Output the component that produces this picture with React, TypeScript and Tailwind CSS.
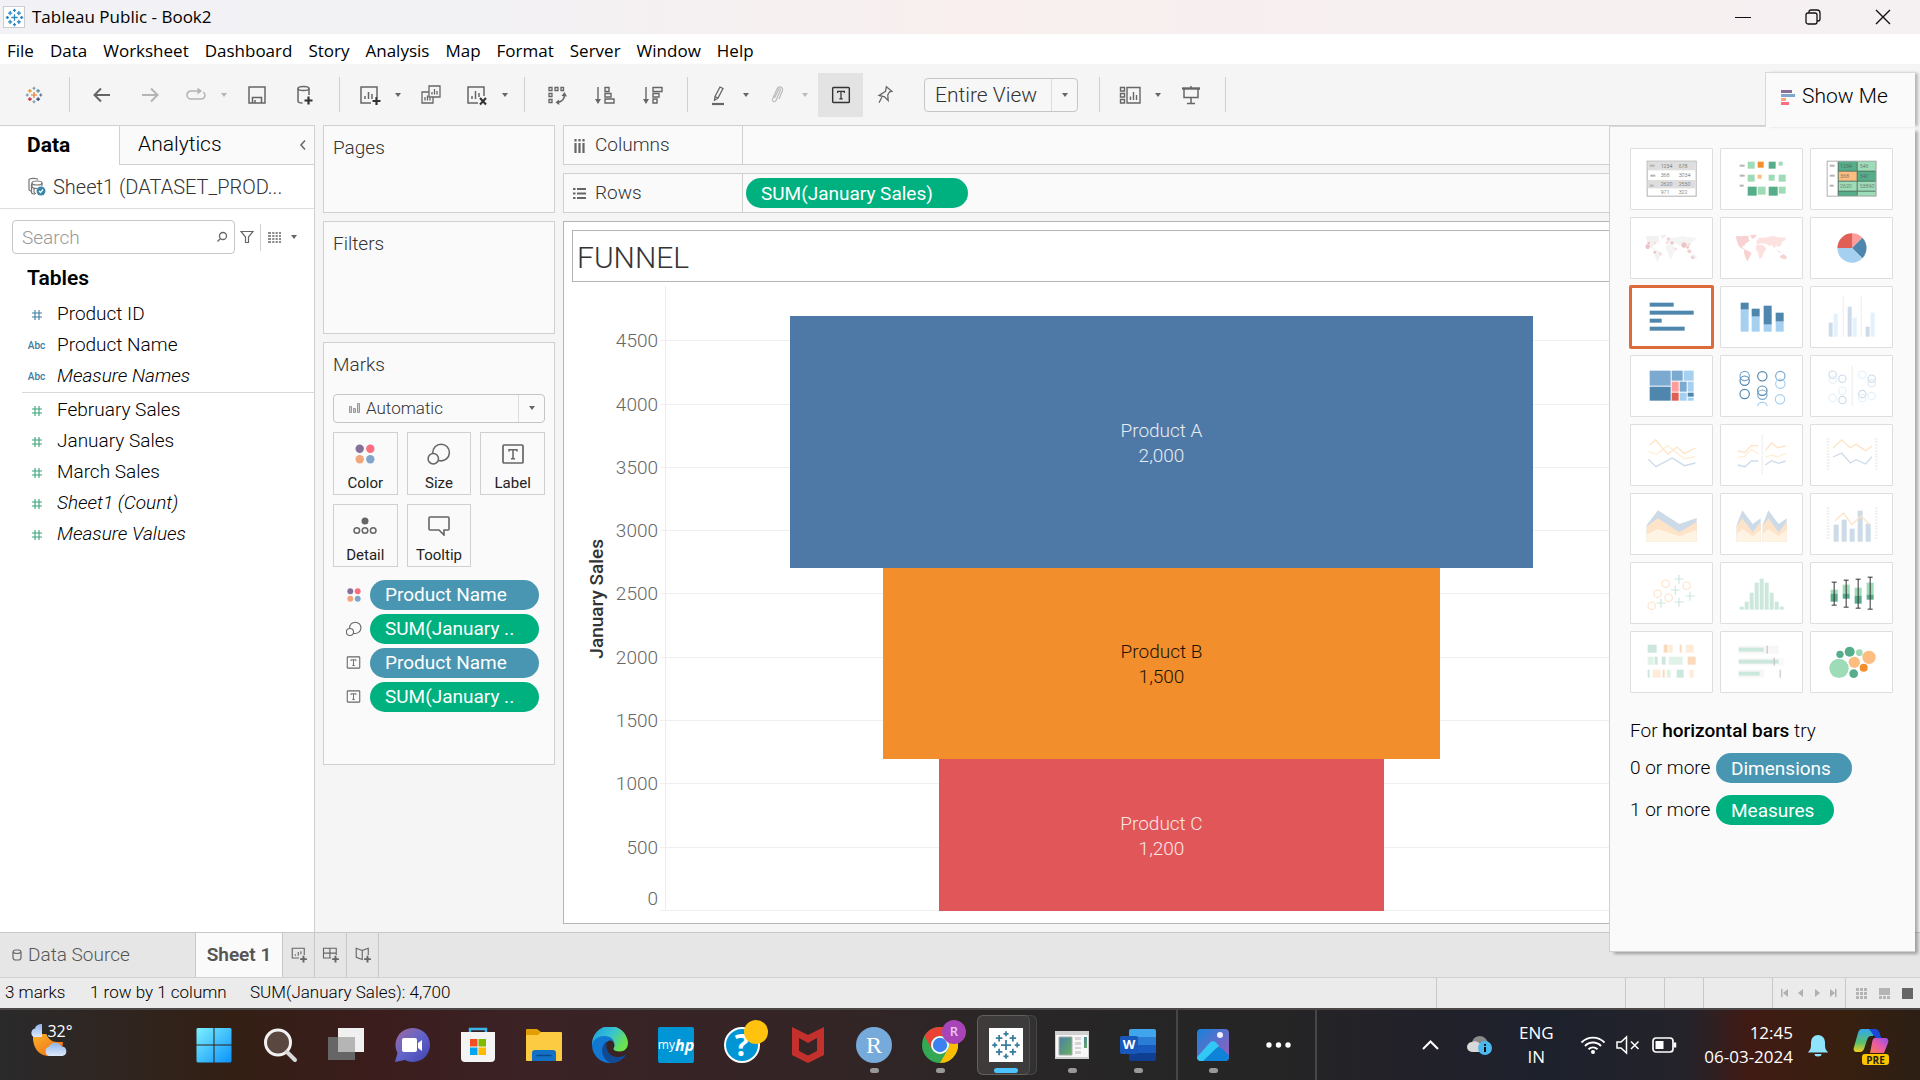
import React, { type ReactNode } from "react";

const menus = ["File", "Data", "Worksheet", "Dashboard", "Story", "Analysis", "Map", "Format", "Server", "Window", "Help"];

/* ---------- shared small pieces ---------- */

function Icon({ children, size = 24, color = "#666" }: { children: ReactNode; size?: number; color?: string }) {
  return (
    <svg width={size} height={size} viewBox="0 0 24 24" fill="none" stroke={color} strokeWidth="1.5" className="shrink-0" aria-hidden="true">
      {children}
    </svg>
  );
}

function Caret({ color = "#666" }: { color?: string }) {
  return (
    <svg width="8" height="8" viewBox="0 0 8 8" className="shrink-0" aria-hidden="true">
      <path d="M1 2h6L4 6z" fill={color} />
    </svg>
  );
}

const crosses: [number, number, number, string][] = [
  [12, 12, 4, "#e8762d"],
  [6.5, 6.5, 2.6, "#e8912d"],
  [17.5, 6.5, 2.6, "#5b879b"],
  [6.5, 17.5, 2.6, "#c72035"],
  [17.5, 17.5, 2.6, "#1f447e"],
  [12, 3, 2, "#7199a6"],
  [12, 21, 2, "#7199a6"],
  [3, 12, 2, "#7199a6"],
  [21, 12, 2, "#5c6692"],
];

function TableauMark({ size, color, weight = 1.6 }: { size: number; color?: string; weight?: number }) {
  return (
    <svg width={size} height={size} viewBox="0 0 24 24" fill="none" strokeWidth={weight} className="shrink-0" aria-hidden="true">
      {crosses.map(([x, y, r, c]) => (
        <path key={`${x}-${y}`} d={`M${x - r} ${y}h${r * 2}M${x} ${y - r}v${r * 2}`} stroke={color ?? c} />
      ))}
    </svg>
  );
}

function FourDots({ size }: { size: number }) {
  return (
    <svg width={size} height={size} viewBox="0 0 20 20" aria-hidden="true">
      <circle cx="4.7" cy="4.7" r="4.2" fill="#86709a" />
      <circle cx="15.3" cy="4.7" r="4.2" fill="#fa6e80" />
      <circle cx="4.7" cy="15.3" r="4.2" fill="#f3a57b" />
      <circle cx="15.3" cy="15.3" r="4.2" fill="#82a5cc" />
    </svg>
  );
}

function SizeIcon({ size }: { size: number }) {
  return (
    <Icon size={size}>
      <path d="M6.5 11.500a8 8 0 1 1 7 7.500c-.7 0-1.200-.1-1.800-.3" />
      <circle cx="7" cy="17" r="5" />
    </Icon>
  );
}

function TextIcon({ size, color = "#666" }: { size: number; color?: string }) {
  return (
    <Icon size={size} color={color}>
      <rect x="2" y="3" width="20" height="18" rx="1" strokeWidth="1.7" />
      <path d="M8 9.500V7.700h8v1.800M12 7.700v9M10 16.700h4" />
    </Icon>
  );
}

function Pill({ children, tone, className = "" }: { children: ReactNode; tone: "blue" | "green"; className?: string }) {
  return (
    <span
      className={`flex h-[30px] items-center rounded-full pt-px pl-[15px] text-[19px] leading-6 font-normal whitespace-nowrap text-white ${tone === "blue" ? "bg-[#4996b2]" : "bg-[#00b180]"} ${className}`}
    >
      {children}
    </span>
  );
}

/* ---------- toolbar ---------- */

function Tool({ label, children, narrow }: { label: string; children: ReactNode; narrow?: boolean }) {
  return (
    <button type="button" aria-label={label} className={`flex h-11 shrink-0 items-center justify-center ${narrow ? "w-11" : "w-12"}`}>
      {children}
    </button>
  );
}

function ToolCaret({ label, color }: { label: string; color?: string }) {
  return (
    <button type="button" aria-label={label} className="flex h-11 w-[15px] shrink-0 items-center pl-[2px]">
      <Caret color={color} />
    </button>
  );
}

function Sep() {
  return <span className="mr-[8px] ml-[10px] h-[35px] w-px shrink-0 bg-[#d0d0d0]" />;
}

function Toolbar() {
  return (
    <div className="flex h-[61px] items-center bg-[#f5f5f5]" role="toolbar">
      <button type="button" aria-label="Start page" className="flex h-11 w-[59px] items-center justify-end pr-4">
        <TableauMark size={18} />
      </button>
      <Sep />
      <Tool label="Undo"><Icon><path d="M20 12H5M11 5.500L4.500 12l6.500 6.500" strokeWidth="2" /></Icon></Tool>
      <Tool label="Redo"><Icon color="#b4b4b4"><path d="M4 12h15M13 5.500l6.500 6.500-6.500 6.500" strokeWidth="2" /></Icon></Tool>
      <Tool label="Replay" narrow>
        <Icon color="#b4b4b4">
          <path d="M10 16H6.500a4 4 0 0 1-3.500-4.300A4 4 0 0 1 6.500 8H17M10 16h7.500A4 4 0 0 0 21 12.500c0-1.500-.7-2.700-1.700-3.500" />
          <path d="M13.500 4.500L18 8l-4.500 3.500z" fill="#b4b4b4" stroke="none" />
        </Icon>
      </Tool>
      <ToolCaret label="Replay options" color="#b4b4b4" />
      <Tool label="Save"><Icon><path d="M4 4h16v16H4zM7.500 20v-5.500h9V20M10 20v-3" /></Icon></Tool>
      <Tool label="New data source">
        <Icon>
          <ellipse cx="10.500" cy="5.500" rx="5.500" ry="2" />
          <path d="M5 5.500V18c0 1.300 2 2 4.500 2M16 5.500V12" />
          <path d="M15.500 13.500v8M11.500 17.500h8" stroke="#333" strokeWidth="2.200" />
        </Icon>
      </Tool>
      <Sep />
      <Tool label="New worksheet" narrow>
        <Icon>
          <path d="M13 20H3V4h16v10M7 16v-3M10.500 16V9M14 16v-5" />
          <path d="M18.500 14v8M14.500 18h8" stroke="#333" strokeWidth="2.200" />
        </Icon>
      </Tool>
      <ToolCaret label="Worksheet options" />
      <Tool label="Duplicate">
        <Icon><path d="M10 3h11v11H10zM13 11.500V9M15.500 11.500V6M18 11.500V8M10 9H3v11h11v-6M6 17.500V14M8.500 17.500v-5M11 17.500V15" strokeWidth="1.300" /></Icon>
      </Tool>
      <Tool label="Clear sheet" narrow>
        <Icon>
          <path d="M13 20H3V4h16v9M7 16v-3M10.500 16V8M14 14v-4" />
          <path d="M15 15l6 6.500M21 15l-6 6.500" stroke="#333" strokeWidth="2.100" />
        </Icon>
      </Tool>
      <ToolCaret label="Clear options" />
      <Sep />
      <Tool label="Swap rows and columns">
        <Icon>
          <path d="M4 4.500h3v3H4zM10 4.500h3v3h-3zM16 4.500h2.500v3H16zM4 10.500h3v3H4zM4 16.500h3v3H4z" strokeWidth="1.300" />
          <path d="M19.500 12c0 4-2 6.500-7 7.500" />
          <path d="M16.500 13l3-4 2.500 4.500zM14 16.500l-3.500 3 3.800 2.500z" fill="#666" stroke="none" />
        </Icon>
      </Tool>
      <Tool label="Sort ascending">
        <Icon><path d="M5 4v15M12 4.500h4v4h-4zM12 10.500h6v3.500h-6zM12 16h9v4h-9z" strokeWidth="1.400" /><path d="M2 16h6l-3 5z" fill="#666" stroke="none" /></Icon>
      </Tool>
      <Tool label="Sort descending">
        <Icon><path d="M5 4v15M12 4.500h9v4h-9zM12 10.500h6v3.500h-6zM12 16h4v4h-4z" strokeWidth="1.400" /><path d="M2 16h6l-3 5z" fill="#666" stroke="none" /></Icon>
      </Tool>
      <Sep />
      <Tool label="Highlight" narrow>
        <Icon><path d="M9 13.500L14 4l3 1.500L12 15l-3.500 2.200zM9 13.500l3 1.500" strokeWidth="1.300" /><path d="M6 21h12" strokeWidth="2.200" /></Icon>
      </Tool>
      <ToolCaret label="Highlight options" />
      <Tool label="Group members" narrow>
        <Icon color="#bbb"><path d="M9.500 15l4-8.500c.6-1.200 2.200-.6 1.800.7L11 17.500c-1 2.300-4.200 1-3.500-1.200L12 6c1.500-3.500 6.500-2 5.500 1.500L14 16" strokeWidth="1.200" /></Icon>
      </Tool>
      <ToolCaret label="Group options" color="#bbb" />
      <button type="button" aria-label="Show mark labels" aria-pressed="true" className="ml-1 flex h-11 w-[45px] shrink-0 items-center justify-center bg-[#e3e3e3]">
        <TextIcon size={20} color="#333" />
      </button>
      <Tool label="Fix axes" narrow>
        <Icon size={22}><path d="M13.500 3l6 5-2.500.5-2 3.500.5 6-4-4-6-1.500 4-2.500 3-2zM8.500 14.500l-3 6" strokeWidth="1.400" /></Icon>
      </Tool>
      <label className="relative ml-[17px] flex h-[34px] w-[154px] shrink-0 items-center rounded-sm border border-[#c6c6c6] bg-[#f7f7f7]">
        <span className="sr-only">Fit</span>
        <select className="h-full w-full appearance-none bg-transparent pl-[10px] text-[21px] leading-7 font-light text-[#333]" defaultValue="Entire View">
          <option>Entire View</option>
        </select>
        <span className="pointer-events-none absolute inset-y-0 right-0 flex w-[26px] items-center justify-center border-l border-[#dcdcdc]">
          <Caret />
        </span>
      </label>
      <span className="w-[11px]" />
      <Sep />
      <Tool label="Show/hide cards" narrow>
        <Icon><path d="M2.500 4.500h4v3.500h-4zM2.500 10.500h4v3.500h-4zM2.500 16.500h4v3.500h-4zM9 4.500h13V20H9zM12.500 17v-3.500M15.500 17V9M18.500 17v-5" strokeWidth="1.400" /></Icon>
      </Tool>
      <ToolCaret label="Card options" />
      <Tool label="Presentation mode">
        <Icon><path d="M5 6v8.500h14V6M12 3v2M12 14.500V20M8 20.500h8" /><path d="M3 5.500h18" strokeWidth="2.400" /></Icon>
      </Tool>
      <Sep />
    </div>
  );
}

/* ---------- data pane ---------- */

type Field = { name: string; kind: "number" | "text"; italic?: boolean };
const dimensions: Field[] = [
  { name: "Product ID", kind: "number" },
  { name: "Product Name", kind: "text" },
  { name: "Measure Names", kind: "text", italic: true },
];
const measures: Field[] = [
  { name: "February Sales", kind: "number" },
  { name: "January Sales", kind: "number" },
  { name: "March Sales", kind: "number" },
  { name: "Sheet1 (Count)", kind: "number", italic: true },
  { name: "Measure Values", kind: "number", italic: true },
];

function FieldRow({ field, color }: { field: Field; color: string }) {
  return (
    <li className="flex h-[31px] items-center">
      <span className="flex w-[29px] items-center justify-center">
        {field.kind === "number" ? (
          <svg width="12" height="12" viewBox="0 0 12 12" stroke={color} strokeWidth="1.100" aria-hidden="true">
            <path d="M4 1v10M8 1v10M1 4h10M1 8h10" />
          </svg>
        ) : (
          <span className="text-[10px] font-medium text-[#3a7ca0]">Abc</span>
        )}
      </span>
      <span className={`ml-[6px] text-[19px] font-light text-black ${field.italic ? "italic" : ""}`}>{field.name}</span>
    </li>
  );
}

function DataPane() {
  return (
    <aside className="flex w-[315px] shrink-0 flex-col border-t border-r border-[#d0d0d0] bg-white">
      <div className="flex h-[39px]">
        <button type="button" className="w-[119px] pl-[27px] text-left text-[21px] font-bold text-black">Data</button>
        <div className="flex flex-1 items-center justify-between border-b border-l border-[#d0d0d0] bg-[#fafafa] pr-[7px] pl-[18px]">
          <button type="button" className="text-[21px] font-light text-black">Analytics</button>
          <button type="button" aria-label="Collapse pane" className="flex">
            <svg width="8" height="12" viewBox="0 0 8 12" fill="none" stroke="#666" strokeWidth="1.500"><path d="M6 1.500L2 6l4 4.500" /></svg>
          </button>
        </div>
      </div>
      <button type="button" className="flex h-11 items-center border-b border-[#dedede] pl-[27px]">
        <svg width="19" height="19" viewBox="0 0 19 19" fill="none" stroke="#777" strokeWidth="1.200" aria-hidden="true">
          <path d="M11 2.500C10 .8 2 .8 2 3v9.500c0 .8 1 1.400 2 1.700M4.500 7v8.500c0 1 1.500 1.500 3.500 1.500" />
          <ellipse cx="10" cy="6" rx="5" ry="2" />
          <path d="M5 6v3.500c0 1 2 2 5 2M15 6v3M7 11v4c0 1 1 1.500 2 1.700" />
          <circle cx="14" cy="14" r="4.500" fill="#3a87a8" stroke="none" />
          <path d="M12 14l1.500 1.500 2.500-3" stroke="#fff" />
        </svg>
        <span className="ml-[7px] text-[20px] font-light text-[#333]">Sheet1 (DATASET_PROD...</span>
      </button>
      <div className="flex items-center pt-[11px] pl-3">
        <label className="flex h-[34px] w-[223px] items-center rounded-sm border border-[#c6c6c6] pr-[6px]">
          <span className="sr-only">Search fields</span>
          <input type="text" placeholder="Search" className="h-full w-full min-w-0 bg-transparent pl-[9px] text-[19px] leading-6 font-light placeholder:text-[#999]" />
          <svg width="12" height="12" viewBox="0 0 12 12" fill="none" stroke="#666" strokeWidth="1.300" className="shrink-0"><circle cx="7" cy="5" r="3.500" /><path d="M4.500 7.500L1.500 10.500" /></svg>
        </label>
        <button type="button" aria-label="Filter fields" className="flex w-[25px] justify-center pr-px">
          <svg width="14" height="14" viewBox="0 0 14 14" fill="none" stroke="#666" strokeWidth="1.200"><path d="M1 1.500h12L8.500 7v5.500h-3V7z" /></svg>
        </button>
        <span className="h-[27px] w-px bg-[#d0d0d0]" />
        <button type="button" aria-label="View fields" className="flex w-[37px] items-center justify-between pl-[7px]">
          <svg width="13" height="11" viewBox="0 0 13 11" stroke="#666" strokeWidth="1.300" strokeDasharray="3 1.200 2.200 1.200 2.200 1.200"><path d="M0 1h13M0 4h13M0 7h13M0 10h13" /></svg>
          <Caret />
        </button>
      </div>
      <h2 className="mt-[9px] flex h-[31px] items-center pl-[27px] text-[21px] font-semibold text-black">Tables</h2>
      <ul className="mt-[5px] ml-[22px] border-b border-[#d9d9d9]">
        {dimensions.map((f) => <FieldRow key={f.name} field={f} color="#3a7ca0" />)}
      </ul>
      <ul className="mt-[2px] ml-[22px]">
        {measures.map((f) => <FieldRow key={f.name} field={f} color="#3aa37a" />)}
      </ul>
    </aside>
  );
}

/* ---------- cards ---------- */

function MarkButton({ label, children }: { label: string; children: ReactNode }) {
  return (
    <button type="button" className="flex h-[63px] flex-col items-center justify-between border border-[#d0d0d0] bg-[#fafafa] pt-[10px] pb-[1px]">
      <span className="flex h-[22px] items-center">{children}</span>
      <span className="text-[15px] leading-5 font-normal text-[#222]">{label}</span>
    </button>
  );
}

function Shelves() {
  const pills: [ReactNode, string, "blue" | "green"][] = [
    [<FourDots size={14} />, "Product Name", "blue"],
    [<SizeIcon size={17} />, "SUM(January ..", "green"],
    [<TextIcon size={15} />, "Product Name", "blue"],
    [<TextIcon size={15} />, "SUM(January ..", "green"],
  ];
  return (
    <div className="ml-2 flex w-[232px] shrink-0 flex-col gap-2 text-[19px] font-light text-[#333]">
      <section className="h-[88px] border border-[#d0d0d0] bg-[#fafafa] px-[9px] pt-2"><h3>Pages</h3></section>
      <section className="h-[113px] border border-[#d0d0d0] bg-[#fafafa] px-[9px] pt-2"><h3>Filters</h3></section>
      <section className="h-[423px] border border-[#d0d0d0] bg-[#fafafa] px-[9px] pt-2">
        <h3>Marks</h3>
        <label className="relative mt-[14px] flex h-[29px] items-center rounded-sm border border-[#c6c6c6]">
          <span className="sr-only">Mark type</span>
          <svg width="11" height="10" viewBox="0 0 11 10" className="absolute left-[15px]" fill="#ccc" stroke="#999"><path d="M.5 3.500h2v6h-2zM4.500 5.500h2v4h-2zM8.500 .5h2v9h-2z" /></svg>
          <select className="h-full w-full appearance-none bg-transparent pl-8 text-[17px] leading-6 font-light text-[#333]" defaultValue="Automatic">
            <option>Automatic</option>
          </select>
          <span className="pointer-events-none absolute inset-y-0 right-0 flex w-[26px] items-center justify-center border-l border-[#dcdcdc]"><Caret /></span>
        </label>
        <div className="mt-[9px] grid grid-cols-3 gap-[9px]">
          <MarkButton label="Color"><FourDots size={20} /></MarkButton>
          <MarkButton label="Size"><SizeIcon size={25} /></MarkButton>
          <MarkButton label="Label"><TextIcon size={24} /></MarkButton>
          <MarkButton label="Detail">
            <svg width="24" height="18" viewBox="0 0 24 18" fill="none" stroke="#666" strokeWidth="1.500"><circle cx="12" cy="4" r="3.500" fill="#666" stroke="none" /><circle cx="3.800" cy="13.500" r="2.800" /><circle cx="12" cy="13.500" r="2.800" /><circle cx="20.200" cy="13.500" r="2.800" /></svg>
          </MarkButton>
          <MarkButton label="Tooltip">
            <svg width="22" height="20" viewBox="0 0 22 20" fill="none" stroke="#666" strokeWidth="1.600"><path d="M2 1h18a1 1 0 0 1 1 1v11a1 1 0 0 1-1 1h-4v5l-5-5H2a1 1 0 0 1-1-1V2a1 1 0 0 1 1-1z" /></svg>
          </MarkButton>
        </div>
        <ul className="mt-[13px] flex flex-col gap-1">
          {pills.map(([icon, text, tone], i) => (
            <li key={i} className="flex items-center">
              <span className="flex w-[37px] items-center justify-center pl-1">{icon}</span>
              <Pill tone={tone} className="w-[169px]">{text}</Pill>
            </li>
          ))}
        </ul>
      </section>
    </div>
  );
}

/* ---------- worksheet ---------- */

const DOMAIN = 4936;
const ticks = [4500, 4000, 3500, 3000, 2500, 2000, 1500, 1000, 500, 0];
const bars = [
  { name: "Product A", value: 2000, box: "w-[75%] bg-[#4e79a7] text-[#e6ecf2]" },
  { name: "Product B", value: 1500, box: "w-[56.25%] bg-[#f28e2b] text-[#1c1208]" },
  { name: "Product C", value: 1200, box: "w-[45%] bg-[#e15759] text-[#fbe6e6]" },
];

function Chart() {
  return (
    <div className="mt-1 flex min-h-0 flex-1 pr-[252px]">
      <div className="flex w-[50px] items-center justify-center">
        <span className="rotate-180 text-[19px] font-medium whitespace-nowrap text-[#333] [writing-mode:vertical-rl]">January Sales</span>
      </div>
      <div className="relative w-[43px] text-[19px] font-light text-[#666]">
        {ticks.map((t) => (
          <span key={t} className={`absolute right-[7px] ${t === 0 ? "-translate-y-1 leading-4" : "translate-y-1/2 leading-6"}`} style={{ bottom: `${(t / DOMAIN) * 100}%` }}>{t}</span>
        ))}
      </div>
      <div className="relative flex flex-1 flex-col items-center border-l border-[#ececec]">
        {ticks.map((t) => (
          <span key={t} className="absolute right-0 -left-[6px] h-px bg-[#efefef]" style={{ bottom: `${(t / DOMAIN) * 100}%` }} />
        ))}
        <div style={{ flexGrow: DOMAIN - 4700 }} />
        {bars.map((b) => (
          <div key={b.name} className={`relative flex basis-0 flex-col items-center justify-center pt-[2px] text-[19px] leading-[25px] font-light ${b.box}`} style={{ flexGrow: b.value }}>
            <span>{b.name}</span>
            <span>{b.value.toLocaleString("en-US")}</span>
          </div>
        ))}
      </div>
    </div>
  );
}

function Worksheet() {
  return (
    <main className="mr-[10px] ml-2 flex min-w-0 flex-1 flex-col gap-2 text-[19px] font-light text-[#333]">
      <div className="flex h-10 border border-[#d0d0d0] bg-[#fafafa]">
        <div className="flex w-[179px] items-center gap-[10px] border-r border-[#d0d0d0] pt-px pl-[10px]">
          <svg width="11" height="14" viewBox="0 0 11 14" stroke="#666" strokeWidth="2.200"><path d="M1.500 4v10M5.500 4v10M9.500 4v10M1.500 0v2.500M5.500 0v2.500M9.500 0v2.500" /></svg>
          Columns
        </div>
      </div>
      <div className="flex h-10 border border-[#d0d0d0] bg-[#fafafa]">
        <div className="flex w-[179px] items-center gap-[9px] border-r border-[#d0d0d0] pt-px pl-[9px]">
          <svg width="13" height="11" viewBox="0 0 13 11" stroke="#666" strokeWidth="2"><path d="M4 1h9M4 5.500h9M4 10h9M0 1h2.500M0 5.500h2.500M0 10h2.500" /></svg>
          Rows
        </div>
        <div className="flex items-center pl-[3px]"><Pill tone="green" className="w-[222px]">SUM(January Sales)</Pill></div>
      </div>
      <section className="mb-2 flex min-h-0 flex-1 flex-col border border-[#b4b4b4] bg-white py-2 pb-3 pl-2">
        <h1 className="mr-2 flex h-[52px] items-center border border-[#b4b4b4] pt-[2px] pl-1 text-[30px] font-light text-[#333]">FUNNEL</h1>
        <Chart />
      </section>
    </main>
  );
}

/* ---------- Show Me panel ---------- */

type R = [number, number, number, number, string];
const Rects = ({ d }: { d: R[] }) => <>{d.map(([x, y, w, h, c], i) => <rect key={i} x={x} y={y} width={w} height={h} fill={c} />)}</>;
type C = [number, number, number, string];
const Rings = ({ d }: { d: C[] }) => <>{d.map(([x, y, r, c], i) => <circle key={i} cx={x} cy={y} r={r} stroke={c} strokeWidth="3.500" fill="none" />)}</>;
const Discs = ({ d }: { d: C[] }) => <>{d.map(([x, y, r, c], i) => <circle key={i} cx={x} cy={y} r={r} fill={c} />)}</>;
const Line = ({ d, c }: { d: string; c: string }) => <polyline points={d} fill="none" stroke={c} strokeWidth="4" />;

const L = "#a5d0f0", B = "#4f86ae", M = "#7ba9d0", G = "#56ad8a", g = "#9edcb7", O = "#f28e2b", o = "#fdbc80";
const pb = "#cddbe9", po = "#fde4c8", py = "#fef0d6", pg = "#cce7dc";

function Land({ a, b }: { a: string; b: string }) {
  return (
    <>
      <g fill={a}>
        <path d="M138 529l14 1 14-2 12 2-2 9 5 3-9 7-6 4-2 6-4-1-3 4 8 7-6-1-12-9-5-14zM180 527l22-2-7 9-8 4-3-7zM163 569l12 4 11 7-6 12-7 14-5-11-5-15z" />
        <path d="M270 590l12-7 10 9-4 7-14-3z" />
      </g>
      <g fill={b}>
        <path d="M200 545l8-11 17 0 25-5 14 4 25 1-4 9-7 2-5 13-8 4-6-5-5 10-6-10-10 1-8-6-14-1-15 3zM200 556l18-1 8 7 5 5-9 12-6 17h-7l-4-18-7-10zM262 570l12 8 4 4-13-5z" />
      </g>
    </>
  );
}

function Numbers({ rows, x1, x2 }: { rows: [number, string, string][]; x1: number; x2: number }) {
  return (
    <g fontSize="16" fill="#555" fontFamily="Roboto">
      {rows.map(([y, p, q]) => (
        <React.Fragment key={y}><text x={x1} y={y}>{p}</text><text x={x2} y={y}>{q}</text></React.Fragment>
      ))}
    </g>
  );
}

function Ladder() {
  return (
    <g stroke="#e6e6e6" strokeWidth="3">
      {[88, 97, 106, 115, 124, 133, 142, 151, 160, 169, 178].map((y) => <path key={y} d={`M681 ${y}h9M826 ${y}h8`} />)}
    </g>
  );
}

const dash = (x: number, ys: number[]): R[] => ys.map((y) => [x, y, 15, 6, "#b4b4b4"]);

/* Each drawing carries the origin of its own coordinate space. */
const charts: { name: string; x: number; y: number; on?: boolean; art: ReactNode }[] = [
  { name: "Text table", x: 91, y: 265, art: <><rect x="142.500" y="304.500" width="147" height="105" fill="#fff" stroke="#b0b0b0" strokeWidth="3" /><Rects d={[[144, 306, 144, 26, "#dedede"], [144, 361, 144, 25, "#dedede"], ...dash(150, [315]), ...dash(152, [345]), [150, 375, 12, 6, "#b4b4b4"]]} /><Numbers x1={183} x2={237} rows={[[325, "1234", "678"], [353, "368", "3034"], [379, "2620", "2550"], [403, "971", "322"]]} /></> },
  { name: "Heat map", x: 361, y: 265, art: <Rects d={[...dash(420, [315, 345]), [420, 375, 12, 6, "#b4b4b4"], [444, 306, 21, 21, g], [474, 306, 18, 18, O], [507, 306, 21, 21, G], [537, 306, 12, 12, g], [444, 345, 21, 21, g], [474, 345, 12, 12, o], [507, 345, 18, 18, g], [537, 345, 21, 21, g], [444, 381, 27, 27, G], [474, 381, 24, 24, g], [507, 381, 27, 27, G], [537, 381, 21, 21, g]]} /> },
  { name: "Highlight table", x: 631, y: 265, art: <><rect x="682.500" y="304.500" width="147" height="105" fill="#fff" stroke="#b0b0b0" strokeWidth="3" /><Rects d={[[714, 306, 114, 102, "#557466"], [717, 306, 54, 27, G], [774, 306, 54, 27, g], [717, 336, 54, 27, o], [774, 336, 54, 27, G], [717, 366, 54, 27, g], [774, 366, 54, 27, g], [717, 396, 54, 12, G], [774, 396, 54, 12, g], ...dash(690, [315, 345]), [690, 375, 12, 6, "#b4b4b4"]]} /><Numbers x1={721} x2={780} rows={[[324, "1234", "546"], [355, "368", "340"], [385, "2620", "53890"]]} /></> },
  { name: "Symbol map", x: 91, y: 472, art: <><Land a="#f1f1f1" b="#f4f4f4" /><Discs d={[[144, 561, 7, "#efc3c6"], [147, 550, 4, "#efc3c6"], [166, 550, 4, "#fbdcdc"], [206, 538, 5, "#f6cfcf"], [202, 549, 4, "#fbdcdc"], [217, 550, 5, "#efc3c6"], [253, 556, 8, "#efc3c6"], [267, 554, 4, "#fbdcdc"], [264, 563, 4, "#efc3c6"], [269, 575, 6, "#f6cfcf"], [228, 568, 4, "#fbdcdc"], [165, 578, 4, "#efc3c6"], [182, 583, 5, "#fbdcdc"], [279, 594, 4, "#efc3c6"]]} /></> },
  { name: "Map", x: 361, y: 472, art: <g transform="translate(270 0)"><Land a="#f8d2d2" b="#fde0e0" /></g> },
  { name: "Pie chart", x: 631, y: 472, art: <><path d="M757 565V521a44 44 0 0 0-44 44z" fill="#e06056" /><path d="M757 565V521a44 44 0 0 1 31 13z" fill="#ff9d9a" /><path d="M757 565l31-31a44 44 0 0 1 0 62z" fill={B} /><path d="M757 565l31 31a44 44 0 0 1-75-31z" fill={L} /></> },
  { name: "Horizontal bars", x: 91, y: 679, on: true, art: <Rects d={[[150, 729, 72, 12, B], [150, 753, 132, 12, B], [150, 777, 36, 12, B], [150, 801, 105, 12, B]]} /> },
  { name: "Stacked bars", x: 361, y: 679, art: <Rects d={[[423, 729, 24, 21, B], [423, 750, 24, 66, L], [456, 747, 24, 24, B], [456, 771, 24, 45, L], [492, 738, 24, 57, B], [492, 795, 24, 21, L], [528, 759, 24, 27, B], [528, 786, 24, 30, L]]} /> },
  { name: "Side-by-side bars", x: 631, y: 679, art: <Rects d={[[687, 789, 12, 42, pb], [702, 762, 12, 69, "#e2f1fc"], [729, 711, 3, 120, "#ececec"], [744, 741, 12, 90, pb], [759, 774, 12, 57, "#e2f1fc"], [783, 711, 3, 120, "#ececec"], [798, 801, 12, 30, pb], [813, 759, 12, 72, "#e2f1fc"]]} /> },
  { name: "Treemap", x: 91, y: 886, art: <Rects d={[[150, 933, 63, 45, M], [150, 981, 63, 42, B], [216, 933, 33, 30, M], [252, 933, 30, 30, L], [216, 966, 21, 30, "#ff9d9a"], [240, 966, 21, 30, M], [264, 966, 18, 30, L], [216, 999, 21, 24, "#e06056"], [240, 999, 21, 24, L], [264, 999, 18, 12, B], [264, 1014, 18, 9, L]]} /> },
  { name: "Circle views", x: 361, y: 886, art: <><Rings d={[[435, 949, 14, M], [435, 963, 14, B], [435, 1003, 14, B], [488, 950, 14, B], [488, 993, 14, B], [488, 1005, 14, M], [542, 949, 14, M], [542, 972, 14, L], [541, 1019, 14, L]]} /><path d="M474 1040a14 12 0 0 1 28 0" fill="none" stroke={L} strokeWidth="3.500" /></> },
  { name: "Side-by-side circles", x: 631, y: 886, art: <><Rects d={[[756, 918, 3, 120, "#ececec"]]} /><Rings d={[[699, 945, 11, pb], [699, 960, 11, "#e2f1fc"], [728, 957, 11, pb], [728, 993, 11, "#e2f1fc"], [699, 1015, 11, "#e2f1fc"], [728, 1021, 11, pb], [788, 945, 11, "#e2f1fc"], [816, 957, 11, pb], [816, 971, 11, "#dbe9f4"], [788, 1003, 11, pb], [788, 1015, 11, "#e2f1fc"], [816, 1009, 11, "#e2f1fc"]]} /></> },
  { name: "Continuous lines", x: 91, y: 43, art: <><Line c={py} d="146,126 170,134 204,108 254,147 287,141" /><Line c={po} d="149,107 168,91 204,134 232,112 254,132 287,115" /><Line c={pb} d="146,149 169,171 218,145 254,168 287,160" /></> },
  { name: "Discrete lines", x: 361, y: 43, art: <><Rects d={[[486, 75, 3, 120, "#ececec"]]} /><Line c={py} d="414,144 434,140 456,119 476,133" /><Line c={po} d="414,124 436,128 456,107 476,109" /><Line c={pb} d="414,166 436,171 455,154 476,154" /><Line c={py} d="497,142 516,136 534,142 558,131" /><Line c={po} d="497,123 516,100 534,114 558,109" /><Line c={pb} d="497,166 516,153 536,161 558,154" /></> },
  { name: "Dual lines", x: 631, y: 43, art: <><Ladder /><Line c={po} d="700,115 726,91 752,114 769,104 798,123 817,109" /><Line c={pb} d="700,142 726,130 752,160 769,150 798,163 817,141" /></> },
  { name: "Area charts (continuous)", x: 91, y: 250, art: <><path d="M141 346l34-44 64 41 52-18v71H141z" fill={pb} /><path d="M141 350l34-24 64 42 52-32v60H141z" fill={po} /><path d="M141 374l34-16 64 22 52-19v35H141z" fill="#fff3e4" /></> },
  { name: "Area charts (discrete)", x: 361, y: 250, art: <>{[0, 78].map((dx) => <g key={dx} transform={`translate(${dx} 0)`}><path d="M411 346l17-44 31 41 24-17v70h-72z" fill={pb} /><path d="M411 350l17-24 31 42 24-32v60h-72z" fill={po} /><path d="M411 374l17-16 31 22 24-19v35h-72z" fill="#fff3e4" /></g>)}</> },
  { name: "Dual combination", x: 631, y: 250, art: <><g transform="translate(0 207)"><Ladder /></g><Rects d={[[702, 345, 15, 51, pb], [726, 330, 15, 66, pb], [750, 357, 15, 39, pb], [774, 303, 15, 93, pb], [798, 342, 15, 54, pb]]} /><Line c={po} d="706,333 732,310 757,345 784,319 811,345" /></> },
  { name: "Scatter plot", x: 91, y: 457, art: <><Rings d={[[198, 522, 11, po], [261, 528, 11, po], [174, 552, 11, po], [207, 564, 11, po], [156, 588, 11, po]]} /><path d="M238 495v27M225 508h27M227 528v27M213 541h27M271 546v27M258 559h27M238 564v27M225 577h27M184 567v27M171 580h27" stroke={pg} strokeWidth="3.500" /></> },
  { name: "Histogram", x: 361, y: 457, art: <Rects d={[[420, 591, 12, 9, pg], [435, 576, 12, 24, pg], [450, 549, 12, 51, pg], [465, 519, 12, 81, pg], [480, 507, 12, 93, pg], [495, 519, 12, 81, pg], [510, 549, 12, 51, pg], [525, 576, 12, 24, pg], [540, 591, 12, 9, pg]]} /> },
  { name: "Box-and-whisker plot", x: 631, y: 457, art: <><Rects d={[[693, 540, 21, 12, g], [693, 552, 21, 24, G], [729, 525, 21, 27, g], [729, 552, 21, 15, G], [765, 534, 21, 24, g], [765, 558, 21, 24, G], [801, 519, 21, 36, g], [801, 555, 21, 15, G]]} /><path d="M696 517.500h15M703.500 517v69M696 586.500h15M732 511.500h15M739.500 511v81M732 592.500h15M768 508.500h15M775.500 508v87M768 595.500h15M804 502.500h15M811.500 502v96M804 598.500h15" stroke="#333" strokeWidth="3" /></> },
  { name: "Gantt chart", x: 91, y: 664, art: <Rects d={[[144, 705, 27, 24, pg], [192, 705, 12, 24, "#fbd9bb"], [207, 705, 12, 24, "#feebd8"], [240, 705, 6, 24, "#fbd9bb"], [258, 705, 24, 24, "#feebd8"], [144, 741, 18, 24, "#e1f2e8"], [165, 741, 9, 24, pg], [186, 741, 12, 24, pg], [207, 741, 42, 24, "#e1f2e8"], [264, 741, 24, 24, "#fbd9bb"], [144, 780, 6, 24, pg], [159, 780, 24, 24, "#feebd8"], [189, 780, 6, 24, "#fbd9bb"], [201, 780, 12, 24, "#e1f2e8"], [231, 780, 21, 24, pg], [270, 780, 12, 24, "#feebd8"]]} /> },
  { name: "Bullet graph", x: 361, y: 664, art: <Rects d={[[417, 708, 120, 24, "#f7f7f7"], [417, 714, 75, 12, pg], [501, 708, 3, 24, "#bbb"], [417, 744, 135, 24, "#f9f9f9"], [417, 750, 120, 12, pg], [522, 744, 3, 24, "#bbb"], [417, 780, 75, 24, "#f7f7f7"], [417, 786, 63, 12, pg], [540, 780, 3, 24, "#bbb"]]} /> },
  { name: "Packed bubbles", x: 631, y: 664, art: <Discs d={[[718, 776, 29, g], [721, 734, 11, G], [750, 726, 15, G], [779, 729, 10, g], [764, 758, 17, o], [808, 743, 20, o], [792, 774, 12, O], [762, 792, 13, G]]} /> },
];

function ShowMe() {
  return (
    <section aria-label="Show Me" className="absolute top-2 right-[5px] z-10 w-[306px] text-[19px] font-light text-black">
      <div className="flex h-[55px]">
        <div className="flex-1 border-b border-[#d9d9d9]" />
        <button type="button" className="flex w-[150px] items-center border-t border-l border-[#d9d9d9] bg-[#fafafa] pb-[6px] pl-[15px] shadow-[4px_0_3px_-1px_rgba(0,0,0,0.25)]">
          <svg width="14" height="16" viewBox="0 0 14 16" aria-hidden="true"><path d="M0 1h11v3H0z" fill="#86709a" /><path d="M0 5h14v3H0z" fill="#82a5cc" /><path d="M0 9h5v3H0z" fill="#f3a57b" /><path d="M0 13h8v3H0z" fill="#fa6e80" /></svg>
          <span className="ml-[7px] text-[21px]">Show Me</span>
        </button>
      </div>
      <div className="border-b border-l border-[#d0d0d0] bg-[#fafafa] px-5 pt-[21px] pb-[126px] shadow-[4px_3px_3px_-1px_rgba(0,0,0,0.3)]">
        <div className="grid grid-cols-[repeat(3,83px)] gap-[7px]">
          {charts.map((c) => (
            <button key={c.name} type="button" aria-label={c.name} className={`h-[62px] rounded-[1px] bg-white ${c.on ? "outline-3 -outline-offset-2 outline-[#dd6b3a]" : "border border-[#dedede]"}`}>
              <svg viewBox={`${c.x} ${c.y} 249 186`} className={c.on ? "h-[62px] w-[83px]" : "-m-px h-[62px] w-[83px]"}>{c.art}</svg>
            </button>
          ))}
        </div>
        <p className="mt-[26px] leading-6">For <span className="font-medium">horizontal bars</span> try</p>
        <p className="mt-[10px] flex items-center"><span className="w-[86px]">0 or more</span><Pill tone="blue" className="w-[136px]">Dimensions</Pill></p>
        <p className="mt-3 flex items-center"><span className="w-[86px]">1 or more</span><Pill tone="green" className="w-[118px]">Measures</Pill></p>
      </div>
    </section>
  );
}

/* ---------- bottom bars ---------- */

function SheetTabs() {
  const tab = "flex w-8 items-center justify-center border-r border-[#c8c8c8]";
  const plus = <path d="M18 13v9M13.500 17.500h9" strokeWidth="2.600" />;
  return (
    <nav className="flex h-[45px] border-t border-[#c8c8c8] bg-[#e6e6e6]">
      <button type="button" className="flex w-[196px] items-center gap-[6px] border-r border-[#c8c8c8] pl-3 text-[19px] font-light text-[#555]">
        <svg width="10" height="12" viewBox="0 0 10 12" fill="none" stroke="#666" strokeWidth="1.200"><rect x="1" y="1" width="8" height="10" rx="2.500" /><path d="M1 3.500c1.500 1.300 6.500 1.300 8 0" /></svg>
        Data Source
      </button>
      <button type="button" className="w-[87px] border-r border-[#c8c8c8] bg-[#fafafa] text-[19px] font-semibold text-[#555]">Sheet 1</button>
      <button type="button" aria-label="New worksheet" className={tab}><Icon size={18}><path d="M12 16H3V3h16v9M7 13v-2M11 13V8M14.500 11V7" />{plus}</Icon></button>
      <button type="button" aria-label="New dashboard" className={tab}><Icon size={18}><path d="M12 16H2V3h17v9M10.500 3v13M2 9.500h17" />{plus}</Icon></button>
      <button type="button" aria-label="New story" className={tab}><Icon size={18}><path d="M11 6L3 3v12l8 3V6l8-3v9" />{plus}</Icon></button>
    </nav>
  );
}

function StatusBar() {
  const cell = "h-full border-l border-[#c8c8c8]";
  return (
    <footer className="flex h-[31px] items-center border-t border-[#d0d0d0] bg-[#ebebeb] pl-[5px] text-[17px] font-light text-black">
      <span className="w-[85px]">3 marks</span>
      <span className="w-[160px]">1 row by 1 column</span>
      <span className="flex-1">SUM(January Sales): 4,700</span>
      <span className={`${cell} w-[189px]`} />
      <span className={`${cell} w-[39px]`} />
      <span className={`${cell} w-[39px]`} />
      <span className={`${cell} w-[69px]`} />
      <span className={`${cell} flex w-[73px] items-center justify-center`}>
        <svg width="56" height="8" viewBox="0 0 56 8" fill="#b0b0b0"><path d="M0 0h1.500v8H0zM7 0v8L2 4zM22 0v8L17 4zM34 0v8l5-4zM49 0v8l5-4zM54 0h1.500v8H54z" /></svg>
      </span>
      <span className={`${cell} flex w-[75px] items-center gap-3 pl-[10px]`}>
        <svg width="11" height="11" viewBox="0 0 11 11" fill="#b4b4b4"><path d="M0 0h3v3H0zM4 0h3v3H4zM8 0h3v3H8zM0 4h3v3H0zM4 4h3v3H4zM8 4h3v3H8zM0 8h3v3H0zM4 8h3v3H4zM8 8h3v3H8z" /></svg>
        <svg width="11" height="11" viewBox="0 0 11 11" fill="#b4b4b4"><path d="M0 0h11v7H0zM0 8h3v3H0zM4 8h3v3H4zM8 8h3v3H8z" /></svg>
        <svg width="11" height="11" viewBox="0 0 11 11" fill="#666"><path d="M0 0h11v11H0z" /></svg>
      </span>
    </footer>
  );
}

function TaskItem({ label, children, running, active }: { label: string; children: ReactNode; running?: boolean; active?: boolean }) {
  return (
    <button type="button" aria-label={label} className="relative flex h-full w-[66px] items-center justify-center">
      {active && <span className="absolute inset-y-[5px] left-[4px] w-[60px] rounded-md border border-white/10 bg-white/5" />}
      {active && <span className="absolute inset-y-[5px] left-[4px] w-[53px] rounded-md border border-white/10 bg-white/5" />}
      <span className="relative">{children}</span>
      {running && <span className="absolute bottom-[7px] h-[5px] w-[9px] rounded-full bg-[#999]" />}
      {active && <span className="absolute bottom-[7px] left-[21px] h-[5px] w-6 rounded-full bg-[#4cc2ff]" />}
    </button>
  );
}

function Taskbar() {
  return (
    <div className="flex h-[72px] items-center border-t-2 border-[#4b4746] bg-[linear-gradient(90deg,#2a2a2b_0%,#2e2724_4%,#331f14_12%,#3b1d1d_20%,#3b2225_27%,#332526_44%,#282626_54%,#252525_66%,#22212a_74%,#1d212c_81%,#25232a_88%,#401a14_91%,#38200f_96%,#2c1e14_100%)] font-['Open_Sans',sans-serif] text-[17px] text-white">
      <button type="button" aria-label="Weather" className="flex h-full w-[181px] pt-[10px] pl-[29px]">
        <svg width="38" height="44" viewBox="0 0 38 44">
          <defs>
            <linearGradient id="sun" x1="0" y1="0" x2="1" y2="1"><stop offset="0" stopColor="#f7b42c" /><stop offset="1" stopColor="#f4650f" /></linearGradient>
            <linearGradient id="cloud" x1="0" y1="0" x2="0" y2="1"><stop offset="0" stopColor="#8fb4ea" /><stop offset="1" stopColor="#dde9fb" /></linearGradient>
          </defs>
          <path d="M4 14h30v8c0 9-7 14-14 14C11 36 3 29 4 14z" fill="url(#sun)" />
          <path d="M5 17a4.500 4.500 0 0 1 1-8.500C7 5 10 4 13 4v13z" fill="url(#cloud)" />
          <path d="M20 36a5 5 0 0 1 0-9.500 7 7 0 0 1 12.500 0 4.800 4.800 0 0 1 1 9.500z" fill="url(#cloud)" />
        </svg>
        <span className="-ml-[21px] flex h-[22px] w-[28px] items-center justify-center rounded-full bg-[#2b2928] text-[16px] leading-5">32°</span>
      </button>
      <TaskItem label="Start">
        <svg width="36" height="36" viewBox="0 0 36 36"><defs><linearGradient id="win" x1="0" y1="0" x2="1" y2="1"><stop offset="0" stopColor="#7df0ff" /><stop offset="1" stopColor="#0a92fb" /></linearGradient></defs><path d="M1.500 1h16v16.500H.5V2zM18.500 1h16l1 1v15.500h-17zM.5 18.500h17v17h-16l-1-1zM18.500 18.500h17v16l-1 1h-16z" fill="url(#win)" /></svg>
      </TaskItem>
      <TaskItem label="Search">
        <svg width="36" height="36" viewBox="0 0 36 36" fill="none"><circle cx="16" cy="15.500" r="12.500" fill="#5a4740" stroke="#f2f2f2" strokeWidth="3" /><path d="M25 25l8 8" stroke="#d8d8d8" strokeWidth="4" strokeLinecap="round" /></svg>
      </TaskItem>
      <TaskItem label="Task view">
        <svg width="38" height="36" viewBox="0 0 38 36"><path d="M11 1h26v24H11z" fill="#f0f0f0" /><path d="M1 10h27v23H1z" fill="#666" /><path d="M11 10h17v15H11z" fill="#b5b5b5" /></svg>
      </TaskItem>
      <TaskItem label="Chat">
        <svg width="36" height="36" viewBox="0 0 36 36"><defs><linearGradient id="chat" x1="0" y1="0" x2="1" y2="1"><stop offset="0" stopColor="#a06a9c" /><stop offset=".5" stopColor="#6264c8" /><stop offset="1" stopColor="#3f42b0" /></linearGradient></defs><path d="M19 1a17 17 0 1 1-8 32l-10 2 2.500-9A17 17 0 0 1 19 1z" fill="url(#chat)" /><rect x="8" y="11" width="15" height="14" rx="2" fill="#fff" /><path d="M24 16l4-3v11l-4-3z" fill="#fff" /></svg>
      </TaskItem>
      <TaskItem label="Store">
        <svg width="36" height="36" viewBox="0 0 36 36"><path d="M10 6V2h16v4" fill="none" stroke="#38b6ea" strokeWidth="2.500" /><path d="M1 5h34v26a4 4 0 0 1-4 4H5a4 4 0 0 1-4-4z" fill="#f4f4f4" /><path d="M10 12h7.500v7.500H10z" fill="#f25022" /><path d="M18.500 12H26v7.500h-7.500z" fill="#7fba00" /><path d="M10 20.500h7.500V28H10z" fill="#00a4ef" /><path d="M18.500 20.500H26V28h-7.500z" fill="#ffb900" /></svg>
      </TaskItem>
      <TaskItem label="File Explorer">
        <svg width="36" height="36" viewBox="0 0 36 36"><path d="M0 3a1 1 0 0 1 1-1h10l4 3v6H0z" fill="#e0a005" /><path d="M0 8h12l3-3h20a1 1 0 0 1 1 1v27a1 1 0 0 1-1 1H1a1 1 0 0 1-1-1z" fill="#fccb41" /><path d="M6 34V26a3 3 0 0 1 3-3h18a3 3 0 0 1 3 3v8z" fill="#1271c4" /><path d="M10.500 28.500h15" stroke="#0a4a8c" strokeWidth="1.500" /></svg>
      </TaskItem>
      <TaskItem label="Edge">
        <svg width="36" height="36" viewBox="0 0 36 36"><defs><linearGradient id="eg" x1="0" y1="0" x2="1" y2=".5"><stop offset="0" stopColor="#1a9be0" /><stop offset=".55" stopColor="#37c3d2" /><stop offset="1" stopColor="#6be24f" /></linearGradient></defs><path d="M0 18A18 18 0 0 1 36 16c0 5-3.500 8.500-8.500 8.500-3.500 0-6-1-6-2.500 0-1 1-1.500 1-4 0-3-3-6-7.500-6C6 12 0 18 0 18z" fill="url(#eg)" /><path d="M0 18c1-6 7-9 12.500-9 6 0 10 4 10 8 0-2-3-4.500-6-3-7 3-5 16 6 17.500 4 .5 8-1 11-4C31 32 25.500 36 18 36 8 36 0 28 0 18z" fill="#1178d4" /><path d="M14.500 14.500C7 20 9.500 33 19 36c7 0 12-3 14.500-8-2 1.200-4.500 2-7.500 2-8 0-13-6-11.500-15.500z" fill="#114a94" /></svg>
      </TaskItem>
      <TaskItem label="myHP">
        <span className="flex h-9 w-9 items-center justify-center rounded-[2px] bg-[#0096d6] text-[12px]">my<span className="text-[16px] font-bold italic">hp</span></span>
      </TaskItem>
      <TaskItem label="HP Support">
        <span className="flex h-9 w-9 items-center justify-center rounded-full border-2 border-white bg-[#0096d6] text-[30px] leading-none font-bold">?</span>
        <span className="absolute -top-[7px] -right-2 h-6 w-6 rounded-full bg-[#ffc20e]" />
      </TaskItem>
      <TaskItem label="McAfee">
        <svg width="34" height="36" viewBox="0 0 34 36"><path d="M1 0l16 8 16-8v28l-16 8-16-8zM8 11v13l9 4.500 9-4.500V11l-9 5z" fill="#c4302b" fillRule="evenodd" /></svg>
      </TaskItem>
      <TaskItem label="RStudio" running>
        <span className="flex h-9 w-9 items-center justify-center rounded-full bg-[#75aadb] font-['Liberation_Serif',serif] text-[24px]">R</span>
      </TaskItem>
      <TaskItem label="Chrome" running>
        <svg width="36" height="36" viewBox="0 0 36 36"><circle cx="18" cy="18" r="18" fill="#34a853" /><path d="M2.400 9A18 18 0 0 1 33.600 9H18a9 9 0 0 0-7.800 13.500z" fill="#ea4335" /><path d="M33.600 9A18 18 0 0 1 18 36l7.800-13.500A9 9 0 0 0 26 13.500L24 9z" fill="#fbbc04" /><circle cx="18" cy="18" r="9" fill="#fff" /><circle cx="18" cy="18" r="7.200" fill="#3b82f0" /></svg>
        <span className="absolute -top-[7px] -right-[8px] flex h-6 w-6 items-center justify-center rounded-full bg-[#a744b8] text-[13px] font-semibold text-[#ecc8f2]">R</span>
      </TaskItem>
      <TaskItem label="Tableau" active>
        <span className="flex h-[34px] w-[34px] items-center justify-center bg-white"><TableauMark size={30} color="#3a7ca0" weight={1.4} /></span>
      </TaskItem>
      <TaskItem label="Resource window" running>
        <svg width="34" height="28" viewBox="0 0 34 28"><defs><linearGradient id="rw" x1="0" y1="0" x2="1" y2="1"><stop offset="0" stopColor="#4a7fa5" /><stop offset="1" stopColor="#69b060" /></linearGradient></defs><path d="M0 0h34v28H0z" fill="#cfcfcf" /><path d="M1 4h32v22H1z" fill="#f7f7f7" /><path d="M4 6h13v18H4z" fill="url(#rw)" stroke="#aaa" /><path d="M20 6h6v3h-6zM20 11h6v3h-6zM20 16h6v2h-6zM20 20h6v3h-6z" fill="#d5d5d5" /><path d="M29 6h3v11h-3z" fill="url(#rw)" /></svg>
      </TaskItem>
      <TaskItem label="Word" running>
        <span className="relative flex h-8 w-9 items-center">
          <span className="ml-auto flex h-8 w-[27px] flex-col overflow-hidden rounded-[2px]"><span className="flex-1 bg-[#41a5ee]" /><span className="flex-1 bg-[#2b7cd3]" /><span className="flex-1 bg-[#185abd]" /><span className="flex-1 bg-[#103f91]" /></span>
          <span className="absolute left-0 flex h-[18px] w-[18px] items-center justify-center rounded-[2px] bg-[#1858bb] text-[13px] font-bold">W</span>
        </span>
      </TaskItem>
      <span className="mr-[2px] ml-[5px] h-full w-[2px] bg-[#464648]" />
      <TaskItem label="Photos" running>
        <svg width="32" height="32" viewBox="0 0 32 32"><defs><linearGradient id="ph" x1="0" y1="0" x2="1" y2="1"><stop offset="0" stopColor="#1483dc" /><stop offset="1" stopColor="#a55ab8" /></linearGradient></defs><rect width="32" height="32" rx="4" fill="url(#ph)" /><path d="M0 28L13 13.500a4 4 0 0 1 6 0L22 17 8 32H4a4 4 0 0 1-4-4z" fill="#32c8f5" /><path d="M6 32L19 19.500a4 4 0 0 1 6 0l7 7V28a4 4 0 0 1-4 4z" fill="#0f83d8" /><circle cx="23" cy="6" r="3" fill="#f3f0ff" /></svg>
      </TaskItem>
      <TaskItem label="More apps"><svg width="26" height="6" viewBox="0 0 26 6" fill="#fff"><circle cx="3" cy="3" r="2.700" /><circle cx="12.500" cy="3" r="2.700" /><circle cx="22" cy="3" r="2.700" /></svg></TaskItem>
      <span className="ml-[3px] h-full w-[2px] bg-[#464648]" />
      <div className="ml-auto flex h-full items-center pr-[31px]">
        <button type="button" aria-label="Show hidden icons"><svg width="17" height="10" viewBox="0 0 17 10" fill="none" stroke="#fff" strokeWidth="2"><path d="M1 9l7.500-7.500L16 9" /></svg></button>
        <button type="button" aria-label="OneDrive" className="ml-7"><svg width="26" height="22" viewBox="0 0 26 22"><path d="M5 8a8 8 0 0 1 14-3l3 5-16 5z" fill="#8a8a8a" /><path d="M5 18a5 5 0 0 1 0-10c3-1.500 6-.5 8 2l4 8z" fill="#d8d8d8" /><circle cx="18" cy="14" r="7" fill="#4cb8f0" /><path d="M18 13v5M18 10v1.700" stroke="#111" strokeWidth="2" /></svg></button>
        <button type="button" className="ml-[25px] w-9 text-center leading-6">ENG<br />IN</button>
        <button type="button" aria-label="Network, volume and battery" className="ml-[26px] flex items-center">
          <svg width="26" height="20" viewBox="0 0 26 20" fill="none" stroke="#fff" strokeWidth="1.900"><path d="M1.500 7.500a16 16 0 0 1 23 0M5 11a11 11 0 0 1 16 0M8.500 14.200a6.500 6.500 0 0 1 9 0" /><circle cx="13" cy="17" r="2" fill="#fff" stroke="none" /></svg>
          <svg width="24" height="20" viewBox="0 0 24 20" fill="none" stroke="#fff" strokeWidth="1.500" className="ml-[10px]"><path d="M1 7h4l5.500-5v16L5 13H1zM15 6.500l7.500 7.500M22.500 6.500L15 14" /></svg>
          <svg width="25" height="16" viewBox="0 0 25 16" fill="none" stroke="#fff" strokeWidth="1.700" className="ml-3"><rect x="1" y="1" width="20" height="14" rx="3" /><path d="M3.500 4h8v8h-8z" fill="#fff" stroke="none" /><path d="M23 5.500v5" strokeWidth="2.500" /></svg>
        </button>
        <button type="button" className="ml-[27px] text-right leading-6">12:45<br />06-03-2024</button>
        <button type="button" aria-label="Notifications" className="ml-[14px]"><svg width="22" height="24" viewBox="0 0 22 24" fill="#8fe3ff"><path d="M2 18c2-2 2-4 2-9a7 7 0 0 1 14 0c0 5 0 7 2 9l1 1.500H1zM7.500 21h7a3.500 2.500 0 0 1-7 0z" /></svg></button>
        <button type="button" aria-label="Copilot preview" className="relative ml-6">
          <svg width="36" height="36" viewBox="0 0 36 36"><defs><linearGradient id="cpa" x1="0" y1="0" x2="0" y2="1"><stop offset="0" stopColor="#2fa8f0" /><stop offset=".6" stopColor="#5cc06a" /><stop offset="1" stopColor="#f0d020" /></linearGradient><linearGradient id="cpb" x1="0" y1="1" x2="1" y2="0"><stop offset="0" stopColor="#fa7a50" /><stop offset=".5" stopColor="#e85aa8" /><stop offset="1" stopColor="#8a50f0" /></linearGradient></defs><path d="M9 2h14l-3 7h-2c-2 0-3 1-4 4l-3 9c-1 2-2 3-4 3H4c-3 0-4-2-3-5L5 6c.7-2.500 2-4 4-4z" fill="url(#cpa)" /><path d="M16 2h6c3 0 4 2 5 5l1 4h-5c-2-2-4-5-7-9z" fill="#1b48d8" /><path d="M22 11h10c3 0 4 2 3 5l-4 10H17l2-10c.5-3 1-5 3-5z" fill="url(#cpb)" /></svg>
          <span className="absolute right-0 -bottom-[2px] flex h-[11px] w-[27px] items-center justify-center rounded-[3px] bg-[#ffc400] text-[10px] leading-none font-bold text-[#221]">PRE</span>
        </button>
      </div>
    </div>
  );
}

export default function App() {
  return (
    <div className="flex h-screen min-h-[900px] flex-col overflow-hidden bg-[#f5f5f5] font-['Roboto',sans-serif]">
      <header className="flex h-[34px] items-center bg-[linear-gradient(90deg,#f2f1f5_0%,#f2f1f4_25%,#f8efee_50%,#f5f0f2_100%)] pl-[3px] font-['Open_Sans',sans-serif] text-[17px] text-black">
        <span className="flex h-[22px] w-[22px] items-center justify-center border border-[#ccc] bg-white"><TableauMark size={19} color="#2e86c1" weight={1.6} /></span>
        <span className="ml-[7px]">Tableau Public - Book2</span>
        <div className="ml-auto flex items-center pr-[2px]">
          <button type="button" aria-label="Minimize" className="flex w-[70px] justify-center"><svg width="16" height="16" viewBox="0 0 16 16" stroke="#111"><path d="M0 8.500h16" /></svg></button>
          <button type="button" aria-label="Restore" className="flex w-[70px] justify-center"><svg width="16" height="16" viewBox="0 0 16 16" fill="none" stroke="#111" strokeWidth="1.300"><rect x="1" y="4" width="11" height="11" rx="2" /><path d="M4 4V3a2 2 0 0 1 2-2h6a3 3 0 0 1 3 3v6a2 2 0 0 1-2 2h-1" /></svg></button>
          <button type="button" aria-label="Close" className="flex w-[70px] justify-center"><svg width="16" height="16" viewBox="0 0 16 16" stroke="#111" strokeWidth="1.400"><path d="M1 1l14 14M15 1L1 15" /></svg></button>
        </div>
      </header>
      <nav className="flex h-[30px] items-center gap-4 bg-white pt-[3px] pl-[7px] font-['Open_Sans',sans-serif] text-[17px] leading-6 text-black">
        {menus.map((m) => <button key={m} type="button">{m}</button>)}
      </nav>
      <div className="relative flex min-h-0 flex-1 flex-col">
        <Toolbar />
        <ShowMe />
        <div className="flex min-h-0 flex-1">
          <DataPane />
          <Shelves />
          <Worksheet />
        </div>
        <SheetTabs />
      </div>
      <StatusBar />
      <Taskbar />
    </div>
  );
}
